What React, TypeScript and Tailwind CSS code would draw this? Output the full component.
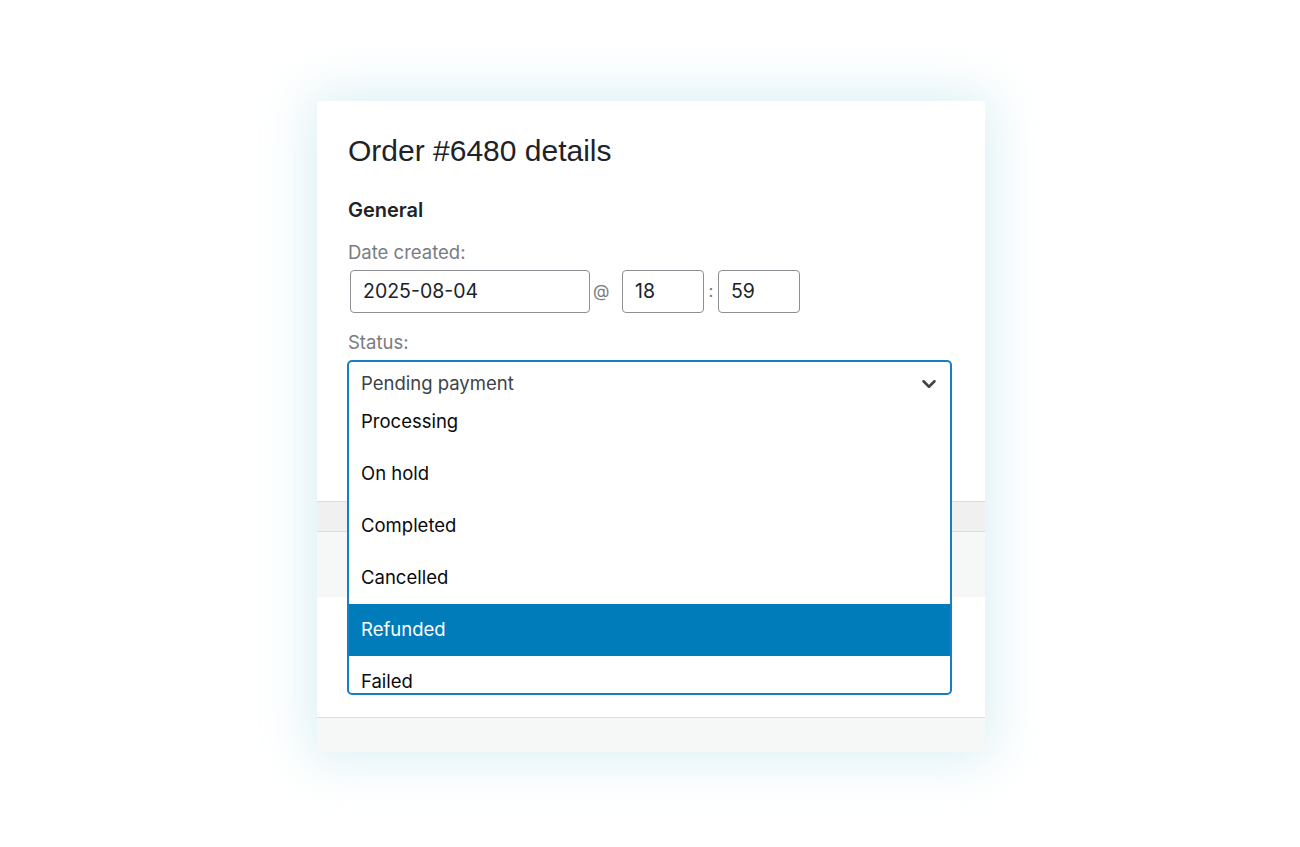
import { ChevronDown } from "lucide-react";

const options = ["Processing", "On hold", "Completed", "Cancelled", "Refunded", "Failed"];

function TimeInput({ value, className }: { value: string; className: string }) {
  return (
    <div
      className={`flex h-[43px] items-center rounded-[4px] border border-[#8c8f94] bg-white px-[12px] text-[19.5px] text-[#1d2327] ${className}`}
    >
      {value}
    </div>
  );
}

export default function App() {
  return (
    <div className="min-h-[847px] bg-white pt-[101px] font-['Inter','Liberation_Sans',sans-serif]">
      <div className="relative ml-[317px] w-[668px] bg-white shadow-[0_0_48px_6px_rgba(165,218,232,0.42)]">
        {/* General section */}
        <div className="h-[400px] px-[31px] pt-[31px]">
          <h2 className="font-['Liberation_Sans',sans-serif] text-[30px] leading-[38px] font-normal text-[#1d2327]">
            Order #6480 details
          </h2>
          <h3 className="mt-[27px] text-[20px] leading-[26px] font-semibold text-[#1d2327]">General</h3>
          <p className="mt-[17px] text-[18.5px] leading-[24px] text-[#787c82]">Date created:</p>
          <div className="mt-[6px] flex items-center">
            <TimeInput value="2025-08-04" className="ml-[2px] w-[240px]" />
            <span className="ml-[3px] w-[29px] text-[17px] text-[#787c82]">@</span>
            <TimeInput value="18" className="w-[82px]" />
            <span className="w-[14px] text-center text-[17px] text-[#787c82]">:</span>
            <TimeInput value="59" className="w-[82px]" />
          </div>
          <p className="mt-[17px] text-[18.5px] leading-[24px] text-[#787c82]">Status:</p>

          {/* Open status dropdown */}
          <div className="relative mt-[6px] h-[40px]">
            <div className="absolute top-0 left-[-1px] z-10 flex h-[335px] w-[605px] flex-col overflow-hidden rounded-[5px] border-2 border-[#1a7dc0] bg-white">
              <div className="flex h-[34px] shrink-0 items-start justify-between pt-[9px] pr-[10px] pl-[12px]">
                <span className="text-[18.5px] leading-[24px] text-[#3c434a]">Pending payment</span>
                <ChevronDown className="mt-[2px] h-[22px] w-[22px] text-[#3c434a]" strokeWidth={2.75} />
              </div>
              {options.map((o) => (
                <div
                  key={o}
                  className={`flex h-[52px] shrink-0 items-center px-[12px] text-[18.5px] ${
                    o === "Refunded" ? "bg-[#007cba] text-white" : "text-[#0a0a0a]"
                  }`}
                >
                  {o}
                </div>
              ))}
            </div>
          </div>
        </div>

        {/* Sections behind the dropdown */}
        <div className="h-[31px] border-y border-[#dcdcde] bg-[#f0f0f1]" />
        <div className="h-[65px] bg-[#f6f7f7]" />
        <div className="h-[120px] bg-white" />
        <div className="h-[35px] border-t border-[#dcdcde] bg-[#f6f7f7]" />
      </div>
    </div>
  );
}
